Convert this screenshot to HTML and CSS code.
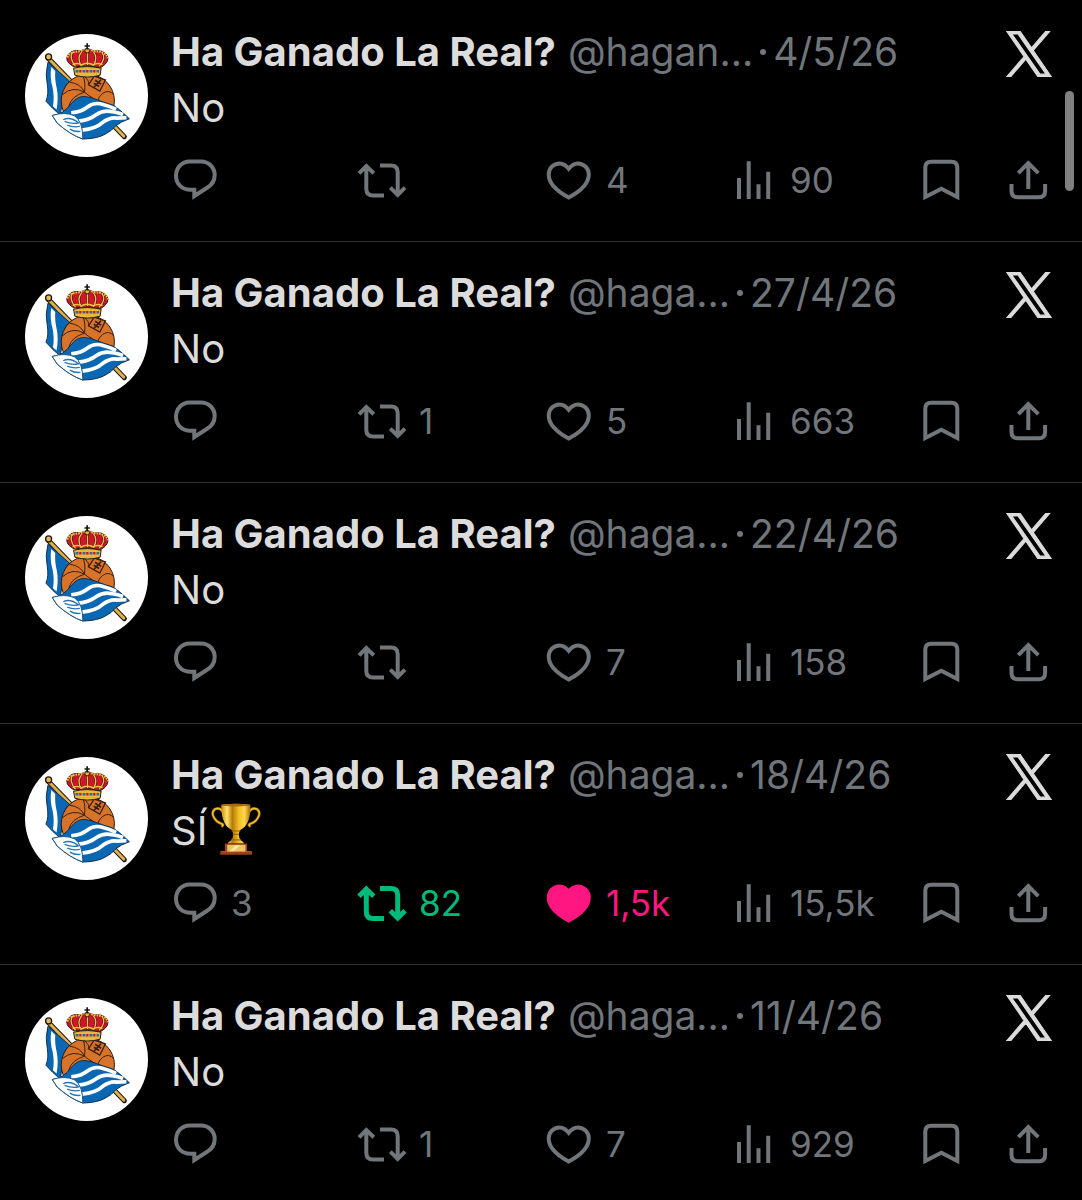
FILE: index.html
```html
<!DOCTYPE html>
<html lang="es">
<head>
  <meta charset="UTF-8" />
  <meta name="viewport" content="width=device-width, initial-scale=1" />
  <title>Ha Ganado La Real?</title>
  <link rel="stylesheet" href="styles.css">
</head>
<body>
  <!-- shared icons -->
  <svg class="sprite" aria-hidden="true">
    <symbol id="crest" viewBox="29 39 370 370">
      <rect x="29" y="39" width="370" height="370" fill="#fff"/>
      <!-- pole -->
      <path d="M99 112 328 348" stroke="#1d1a14" stroke-width="15" stroke-linecap="round"/>
      <path d="M99 112 326 346" stroke="#e2b04a" stroke-width="9" stroke-linecap="round"/>
      <circle cx="100" cy="108" r="9" fill="#e9b850" stroke="#1d1a14" stroke-width="4"/>
      <!-- back flag -->
      <path d="M98 124 Q89 160 96 190 Q101 220 92 241 Q110 262 135 283 L146 215 Q150 190 163 181Z" fill="#0a67b4" stroke="#14304d" stroke-width="3"/>
      <path d="M108 138 Q103 170 112 200 Q118 230 113 256 L124 266 Q130 232 125 205 Q118 175 120 150Z" fill="#fff"/>
      <!-- ball -->
      <circle cx="218" cy="240" r="80" fill="#d8742a" stroke="#2a1a10" stroke-width="3"/>
      <g fill="none" stroke="#3a2012" stroke-width="3">
        <path d="M163 184 Q196 188 208 214 Q228 232 290 262"/>
        <path d="M208 214 Q172 194 141 222"/>
        <path d="M208 214 Q212 184 203 163"/>
        <path d="M208 214 Q168 226 161 256 Q160 280 176 300"/>
        <path d="M296 222 Q282 204 262 218 Q250 228 248 240"/>
        <path d="M203 163 Q225 180 220 192"/>
        <path d="M237 166 271 177 254 211 220 192Z" stroke-width="4"/>
        <path d="M258 176 236 200M240 178 258 190M236 187 252 197" stroke-width="5"/>
      </g>
      <!-- crown -->
      <path d="M175 142 Q216 132 258 142 L255 163 Q216 174 179 163Z" fill="#e8b83c" stroke="#2a1a10" stroke-width="3"/>
      <path d="M176 138 Q145 120 159 101 Q170 85 196 90 Q216 78 236 90 Q264 86 276 103 Q286 122 257 140 Q216 130 176 138Z" fill="#d0142a" stroke="#2a1a10" stroke-width="3"/>
      <g fill="none" stroke="#2a1a10" stroke-width="7">
        <path d="M181 136 Q159 110 173 93M198 134 Q184 110 199 93M217 132V90M235 134 Q249 110 235 93M252 136 Q275 112 260 94"/>
      </g>
      <g fill="none" stroke="#efc243" stroke-width="4">
        <path d="M181 136 Q159 110 173 93M198 134 Q184 110 199 93M217 132V90M235 134 Q249 110 235 93M252 136 Q275 112 260 94"/>
      </g>
      <path d="M157 110 Q160 92 196 91 Q216 80 236 91 Q274 90 278 112" fill="none" stroke="#efc243" stroke-width="6" stroke-dasharray="5 3"/>
      <path d="M172 131 Q190 124 198 132 Q216 122 235 132 Q246 124 262 131" fill="none" stroke="#efc243" stroke-width="5"/>
      <path d="M181 151H252" stroke="#2e6aa8" stroke-width="7" stroke-dasharray="9 12"/>
      <path d="M192 151H250" stroke="#c51a2b" stroke-width="7" stroke-dasharray="7 14"/>
      <circle cx="216" cy="89" r="7" fill="#e8b83c" stroke="#2a1a10" stroke-width="3"/>
      <path d="M216 67V86M208 75H224" stroke="#1a1614" stroke-width="5"/>
      <!-- front flag -->
      <path d="M111 284 Q130 284 143 273 Q158 262 167 250 Q184 226 209 227 Q228 229 246 237 Q270 246 291 252 Q308 260 343 294 Q318 302 301 316 Q288 332 274 338 Q250 354 203 355 Q165 342 126 307Z" fill="#0a67b4" stroke="#14304d" stroke-width="3"/>
      <g fill="none" stroke="#fff" stroke-width="11">
        <path d="M168 276 Q198 274 218 258 Q238 242 266 252 Q284 256 303 266"/>
        <path d="M190 301 Q222 298 244 281 Q266 266 292 273 Q308 275 324 281"/>
        <path d="M200 328 Q242 324 264 304 Q286 288 306 292 Q320 291 334 291"/>
      </g>
      <path d="M111 284 Q148 272 178 285 Q204 304 203 355 Q165 342 126 307Z" fill="#fff" stroke="#1b5688" stroke-width="3"/>
      <path d="M144 297 Q164 286 190 306 Q172 311 148 302M156 313 Q174 321 194 317M164 325 Q178 334 196 332" fill="none" stroke="#2675b5" stroke-width="4"/>
    </symbol>
    <symbol id="x-logo" viewBox="0 0 24 24">
      <path d="M14.234 10.162 22.977 0h-2.072l-7.591 8.824L7.251 0H.258l9.168 13.343L.258 24H2.33l8.016-9.318L16.749 24h6.993zm-2.837 3.299-.929-1.329L3.076 1.56h3.182l5.965 8.532.929 1.329 7.754 11.09h-3.182z" fill="currentColor" stroke="currentColor" stroke-width=".6"/>
    </symbol>
    <symbol id="reply" viewBox="0 0 46 42">
      <path d="M16.5 2.5H28C36 2.5 41.7 8.6 41.7 16c0 5.500-3 10.200-8 13L21.300 37V30.700H17.500C9 30.700 3 25 3 16.800 3 8.800 8.800 2.500 16.500 2.500Z"/>
    </symbol>
    <symbol id="repost" viewBox="0 0 50 42">
      <path d="M27 36.500H16Q9.300 36.500 9.300 29.800V7M2 14.300 9.300 7 16.800 14.300M23 6.500H34Q40.700 6.500 40.700 13.200V36M33.300 28.700 40.700 36 48 28.700"/>
    </symbol>
    <symbol id="like" viewBox="0 0 48 42">
      <path d="M22.700 9.800C19.800 6 16.700 4.400 13.600 4.400 7.400 4.400 2.700 9.200 2.700 15.600 2.700 25 11.500 32.600 22.700 38.600 34 32.600 42.800 25 42.800 15.600 42.800 9.200 38 4.400 31.800 4.400 28.700 4.400 25.600 6 22.700 9.800Z"/>
    </symbol>
    <symbol id="views" viewBox="0 0 42 42">
      <path d="M3 19V40M12.700 2.300V40M22.500 25.300V40M32.200 12.700V40"/>
    </symbol>
    <symbol id="bookmark" viewBox="0 0 40 42">
      <path d="M4.300 38V8.500Q4.300 2.700 10 2.700H30.500Q36.300 2.700 36.300 8.500V38L20.300 29.800Z"/>
    </symbol>
    <symbol id="share" viewBox="0 0 42 42">
      <path d="M3.500 25V32Q3.500 38.200 9.700 38.200H30.900Q37.100 38.200 37.100 32V25M20.300 30V4.200M10.300 14.200 20.300 4.200 30.300 14.200"/>
    </symbol>
  </svg>

  <main class="timeline">
    <article class="post">
      <a class="avatar" href="#" aria-label="Ha Ganado La Real?"><svg><use href="#crest"/></svg></a>
      <div class="content">
        <header class="post-head">
          <a class="name" href="#">Ha Ganado La Real?</a>
          <span class="meta"><span>@hagan...</span><span class="dot"></span><time datetime="2026-05-04">4/5/26</time></span>
          <svg class="x-logo"><use href="#x-logo"/></svg>
        </header>
        <p class="text">No</p>
        <div class="actions">
          <button aria-label="Responder"><svg class="w46"><use href="#reply"/></svg></button>
          <button aria-label="Repostear"><svg class="w50"><use href="#repost"/></svg></button>
          <button aria-label="Me gusta"><svg class="w48"><use href="#like"/></svg>4</button>
          <button aria-label="Ver"><svg class="w42"><use href="#views"/></svg>90</button>
          <button aria-label="Guardar"><svg class="w40"><use href="#bookmark"/></svg></button>
          <button aria-label="Compartir"><svg class="w42"><use href="#share"/></svg></button>
        </div>
      </div>
    </article>

    <article class="post">
      <a class="avatar" href="#" aria-label="Ha Ganado La Real?"><svg><use href="#crest"/></svg></a>
      <div class="content">
        <header class="post-head">
          <a class="name" href="#">Ha Ganado La Real?</a>
          <span class="meta"><span>@haga...</span><span class="dot"></span><time datetime="2026-04-27">27/4/26</time></span>
          <svg class="x-logo"><use href="#x-logo"/></svg>
        </header>
        <p class="text">No</p>
        <div class="actions">
          <button aria-label="Responder"><svg class="w46"><use href="#reply"/></svg></button>
          <button aria-label="Repostear"><svg class="w50"><use href="#repost"/></svg>1</button>
          <button aria-label="Me gusta"><svg class="w48"><use href="#like"/></svg>5</button>
          <button aria-label="Ver"><svg class="w42"><use href="#views"/></svg>663</button>
          <button aria-label="Guardar"><svg class="w40"><use href="#bookmark"/></svg></button>
          <button aria-label="Compartir"><svg class="w42"><use href="#share"/></svg></button>
        </div>
      </div>
    </article>

    <article class="post">
      <a class="avatar" href="#" aria-label="Ha Ganado La Real?"><svg><use href="#crest"/></svg></a>
      <div class="content">
        <header class="post-head">
          <a class="name" href="#">Ha Ganado La Real?</a>
          <span class="meta"><span>@haga...</span><span class="dot"></span><time datetime="2026-04-22">22/4/26</time></span>
          <svg class="x-logo"><use href="#x-logo"/></svg>
        </header>
        <p class="text">No</p>
        <div class="actions">
          <button aria-label="Responder"><svg class="w46"><use href="#reply"/></svg></button>
          <button aria-label="Repostear"><svg class="w50"><use href="#repost"/></svg></button>
          <button aria-label="Me gusta"><svg class="w48"><use href="#like"/></svg>7</button>
          <button aria-label="Ver"><svg class="w42"><use href="#views"/></svg>158</button>
          <button aria-label="Guardar"><svg class="w40"><use href="#bookmark"/></svg></button>
          <button aria-label="Compartir"><svg class="w42"><use href="#share"/></svg></button>
        </div>
      </div>
    </article>

    <article class="post">
      <a class="avatar" href="#" aria-label="Ha Ganado La Real?"><svg><use href="#crest"/></svg></a>
      <div class="content">
        <header class="post-head">
          <a class="name" href="#">Ha Ganado La Real?</a>
          <span class="meta"><span>@haga...</span><span class="dot"></span><time datetime="2026-04-18">18/4/26</time></span>
          <svg class="x-logo"><use href="#x-logo"/></svg>
        </header>
        <p class="text">SÍ<svg class="trophy" viewBox="0 0 151 156" role="img" aria-label="Trofeo">
            <defs>
              <linearGradient id="gold">
                <stop offset="0" stop-color="#c98a10"/>
                <stop offset=".2" stop-color="#ffe36a"/>
                <stop offset=".38" stop-color="#b87808"/>
                <stop offset=".6" stop-color="#f2bf24"/>
                <stop offset=".8" stop-color="#ffd84a"/>
                <stop offset="1" stop-color="#a86a06"/>
              </linearGradient>
            </defs>
            <g fill="none" stroke="#a8700c" stroke-width="8" stroke-linecap="round">
              <path d="M34 24Q26 12 12 18Q-1 28 10 45Q17 57 29 61Q40 64 34 69"/>
              <path d="M117 24Q125 12 139 18Q152 28 141 45Q134 57 122 61Q111 64 117 69"/>
            </g>
            <g fill="none" stroke="#f3c536" stroke-width="4" stroke-linecap="round">
              <path d="M34 24Q26 12 12 18Q-1 28 10 45Q17 57 29 61Q40 64 34 69"/>
              <path d="M117 24Q125 12 139 18Q152 28 141 45Q134 57 122 61Q111 64 117 69"/>
            </g>
            <path d="M31 5Q75-2 119 5Q121 66 87 82L84 93Q83 104 91 113Q99 117 100 122H51Q52 117 60 113Q68 104 67 93L64 82Q30 66 31 5Z" fill="url(#gold)"/>
            <ellipse cx="75" cy="6" rx="43" ry="4" fill="#a9690c"/>
            <path d="M62 84H89M66 94H85M61 111H91" stroke="#9b5d05" stroke-width="3"/>
            <path d="M42 122H109V145H42Z" fill="#a5451b"/>
            <path d="M28 145H124V156H28Z" fill="#97401a"/>
            <path d="M31 146H121" stroke="#cf6b32" stroke-width="2"/>
            <path d="M49 126H104V146H49Z" fill="#edc365"/>
            <path d="M56 145 75 127H88L69 145Z" fill="#ffe7a0"/>
          </svg></p>
        <div class="actions">
          <button aria-label="Responder"><svg class="w46"><use href="#reply"/></svg>3</button>
          <button class="reposted" aria-label="Repostear"><svg class="w50"><use href="#repost"/></svg>82</button>
          <button class="liked" aria-label="Me gusta"><svg class="w48"><use href="#like"/></svg>1,5k</button>
          <button aria-label="Ver"><svg class="w42"><use href="#views"/></svg>15,5k</button>
          <button aria-label="Guardar"><svg class="w40"><use href="#bookmark"/></svg></button>
          <button aria-label="Compartir"><svg class="w42"><use href="#share"/></svg></button>
        </div>
      </div>
    </article>

    <article class="post">
      <a class="avatar" href="#" aria-label="Ha Ganado La Real?"><svg><use href="#crest"/></svg></a>
      <div class="content">
        <header class="post-head">
          <a class="name" href="#">Ha Ganado La Real?</a>
          <span class="meta"><span>@haga...</span><span class="dot"></span><time datetime="2026-04-11">11/4/26</time></span>
          <svg class="x-logo"><use href="#x-logo"/></svg>
        </header>
        <p class="text">No</p>
        <div class="actions">
          <button aria-label="Responder"><svg class="w46"><use href="#reply"/></svg></button>
          <button aria-label="Repostear"><svg class="w50"><use href="#repost"/></svg>1</button>
          <button aria-label="Me gusta"><svg class="w48"><use href="#like"/></svg>7</button>
          <button aria-label="Ver"><svg class="w42"><use href="#views"/></svg>929</button>
          <button aria-label="Guardar"><svg class="w40"><use href="#bookmark"/></svg></button>
          <button aria-label="Compartir"><svg class="w42"><use href="#share"/></svg></button>
        </div>
      </div>
    </article>
  </main>

  <div class="scroll-thumb"></div>
</body>
</html>
```
FILE: styles.css
```css
* { box-sizing: border-box; }
body {
  margin: 0;
  background: #000;
  color: #dcdcdc;
  font-family: Inter, "Liberation Sans", sans-serif;
  font-size: 40px;
  line-height: 56px;
}
a { color: inherit; text-decoration: none; }
svg { display: block; flex: none; }
.sprite { position: absolute; width: 0; height: 0; }

.timeline { padding-top: 1px; }
.post {
  display: flex; gap: 23px;
  padding: 23px 30px 40px 25px;
  border-bottom: 1px solid #2f3133;
}
.post:last-child { border-bottom: none; padding-bottom: 24px; }

.avatar {
  flex: none;
  width: 123px; height: 123px; margin-top: 10px;
  border-radius: 50%; overflow: hidden;
}
.avatar svg { width: 100%; height: 100%; }

.content { flex: 1; min-width: 0; }
.post-head { display: flex; align-items: center; white-space: nowrap; }
.name { font-weight: 700; }
.meta {
  display: flex; align-items: center;
  margin-left: 12px;
  color: #71767b; font-size: 39px;
}
.dot {
  width: 6px; height: 6px; margin: 0 7px;
  border-radius: 50%; background: #71767b;
}
.x-logo { width: 46px; height: 46px; margin: 4px 0 0 auto; overflow: visible; }

.text { margin: 0; height: 56px; }
.trophy { display: inline-block; width: 50px; height: 52px; margin-left: 4px; vertical-align: -10px; }

/* reply, repost, like, views, bookmark, share */
.actions {
  display: grid;
  grid-template-columns: 184fr 189fr 190fr 185fr 87fr 44fr;
  margin: 23px 0 0 2px;
}
.actions button {
  display: flex; align-items: center; gap: 12px;
  padding: 0; border: none; background: none;
  color: #71767b; cursor: pointer;
  font: inherit; font-size: 35px; line-height: 42px; text-align: left;
}
.actions svg {
  height: 42px;
  fill: none; stroke: currentColor; stroke-width: 4;
}
.w40 { width: 40px; }
.w42 { width: 42px; }
.w46 { width: 46px; }
.w48 { width: 48px; }
.w50 { width: 50px; }

.actions .reposted { color: #00ba7c; }
.actions .reposted svg { stroke-width: 5; }
.actions .liked { color: #ff1680; }
.actions .liked svg { fill: currentColor; }

.scroll-thumb {
  position: fixed; top: 91px; right: 8px;
  width: 9px; height: 100px;
  border-radius: 5px; background: #808080;
}
```
